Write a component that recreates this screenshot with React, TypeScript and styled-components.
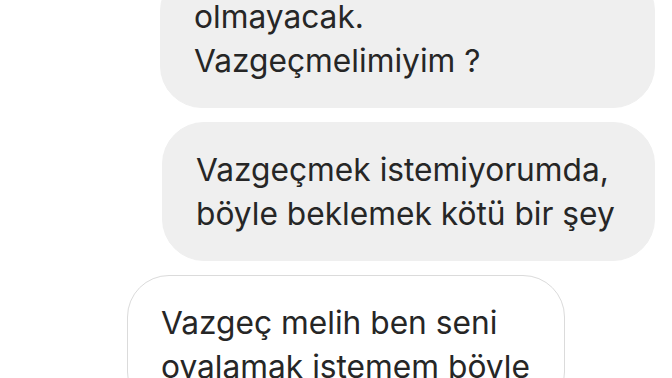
import styled, { createGlobalStyle } from "styled-components";

const GlobalStyle = createGlobalStyle`
  html, body {
    margin: 0;
    padding: 0;
    background: #ffffff;
    overflow: hidden;
  }
`;

const Thread = styled.div`
  width: 672px;
  height: 378px;
  overflow: hidden;
  display: flex;
  flex-direction: column;
  gap: 14px;
  font-family: Inter, "Noto Sans", sans-serif;
`;

const Row = styled.div<{ $mine?: boolean }>`
  display: flex;
  justify-content: ${(p) => (p.$mine ? "flex-end" : "flex-start")};
  padding: ${(p) => (p.$mine ? "0 17px 0 0" : "0 0 0 127px")};
`;

const Bubble = styled.div<{ $mine?: boolean; $width: number; $cut?: number }>`
  box-sizing: border-box;
  width: ${(p) => p.$width}px;
  margin-top: ${(p) => (p.$cut ? -p.$cut : 0)}px;
  padding: 25px 28px 24px 33px;
  border-radius: 42px;
  background: ${(p) => (p.$mine ? "#efefef" : "#ffffff")};
  border: 1px solid ${(p) => (p.$mine ? "#efefef" : "#dbdbdb")};
  color: #262626;
  font-size: 31.7px;
  line-height: 44px;
  white-space: nowrap;
`;

function App() {
  return (
    <>
      <GlobalStyle />
      <Thread>
        <Row $mine>
          <Bubble $mine $width={495} $cut={31}>
            olmayacak.
            <br />
            Vazgeçmelimiyim ?
          </Bubble>
        </Row>
        <Row $mine>
          <Bubble $mine $width={493}>
            Vazgeçmek istemiyorumda,
            <br />
            böyle beklemek kötü bir şey
          </Bubble>
        </Row>
        <Row>
          <Bubble $width={438}>
            Vazgeç melih ben seni
            <br />
            oyalamak istemem böyle
          </Bubble>
        </Row>
      </Thread>
    </>
  );
}

export default App;
